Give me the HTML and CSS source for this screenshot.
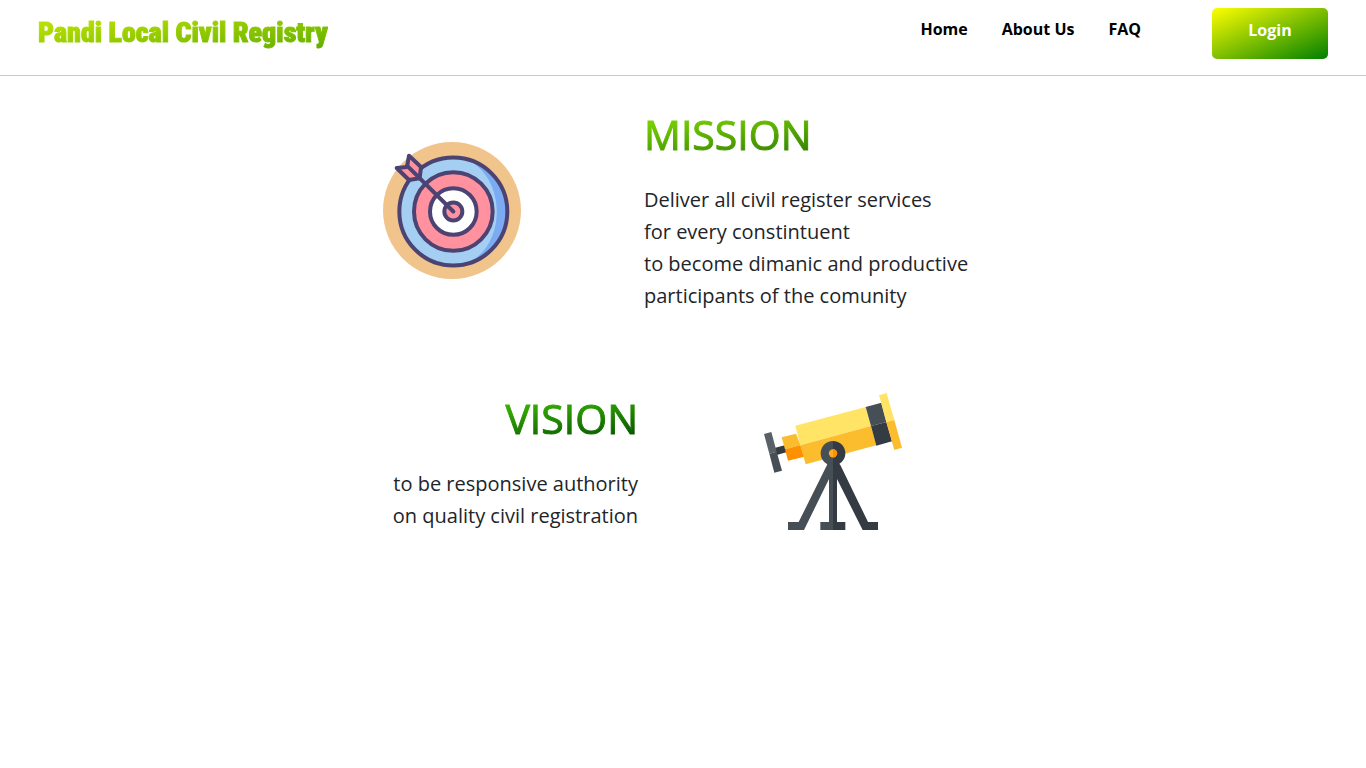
FILE: index.html
```html
<!DOCTYPE html>
<html lang="en">
<head>
<meta charset="utf-8">
<meta name="viewport" content="width=device-width, initial-scale=1">
<title>Pandi Local Civil Registry</title>
<link rel="stylesheet" href="styles.css">
</head>
<body>
<header class="site-header">
  <a class="brand" href="#">Pandi Local Civil Registry</a>
  <nav class="site-nav">
    <a href="#">Home</a>
    <a href="#">About Us</a>
    <a href="#">FAQ</a>
  </nav>
  <button class="login" type="button">Login</button>
</header>
<main class="content">
  <section class="row mission">
    <svg class="art" viewBox="39 36 414 411" aria-hidden="true">
      <ellipse cx="246" cy="241.500" rx="207" ry="205.500" fill="#f1c48b"/>
      <circle cx="250" cy="244.500" r="162" fill="#a4cff2"/>
      <path d="M286 86A163 163 0 0 1 286 403C412 350 412 140 286 86Z" fill="#7babf2"/>
      <g stroke="#4c4372" stroke-width="12">
        <circle cx="250" cy="244.500" r="162" fill="none"/>
        <circle cx="250" cy="244.500" r="118" fill="#ff929e"/>
        <circle cx="250" cy="244.500" r="70" fill="#fff"/>
        <circle cx="250" cy="244.500" r="27" fill="#ff929e"/>
        <path d="M117 77L153 111L149 145L117 150L80 114L111 111Z" fill="#ff929e" stroke-linejoin="round"/>
        <path d="M111 107L250 244.500" fill="none" stroke-linecap="round"/>
      </g>
    </svg>
    <div class="copy">
      <h1>MISSION</h1>
      <p>Deliver all civil register services<br>for every constintuent<br>to become dimanic and productive<br>participants of the comunity</p>
    </div>
  </section>
  <section class="row vision">
    <div class="copy">
      <h1>VISION</h1>
      <p>to be responsive authority<br>on quality civil registration</p>
    </div>
    <svg class="art" viewBox="27 24 414 411" aria-hidden="true">
      <path d="M58 189L92 180L97 201L62 211Z" fill="#343b42"/>
      <path d="M27 147L49 141L65 200L43 206Z" fill="#596067"/>
      <path d="M43 206L65 200L81 257L58 263Z" fill="#474f56"/>
      <path d="M80 157L123 146L137 181L90 193Z" fill="#fbbd2d"/>
      <path d="M90 193L136 181L148 215L99 227Z" fill="#ff9100"/>
      <path d="M121 122L332 66L348 123L136 181Z" fill="#ffe466"/>
      <path d="M136 181L348 123L364 181L152 238Z" fill="#fbbd2d"/>
      <path d="M332 66L379 53L394 111L348 123Z" fill="#474f56"/>
      <path d="M348 123L394 111L411 169L364 182Z" fill="#343b42"/>
      <path d="M372 31L395 24L418 105L394 111Z" fill="#ffe466"/>
      <path d="M394 111L418 105L441 188L418 195Z" fill="#fbbd2d"/>
      <path d="M219 232H234V290H222V282L147 435H99V411H131L216 240Z" fill="#474f56"/>
      <path d="M234 232H249L256 240L339 411H369V435H323L246 282V290H234Z" fill="#343b42"/>
      <path d="M222 240H234V435H196V411H222Z" fill="#474f56"/>
      <path d="M234 240H246V411H271V435H234Z" fill="#343b42"/>
      <path d="M234 168A37 37 0 0 0 234 242Z" fill="#474f56"/>
      <path d="M234 168A37 37 0 0 1 234 242Z" fill="#343b42"/>
      <circle cx="234" cy="205" r="12.500" fill="#fbac22"/>
      <path d="M234 192.500A12.500 12.500 0 0 1 234 217.500Z" fill="#ff9100"/>
    </svg>
  </section>
</main>
</body>
</html>
```
FILE: styles.css
```css
* { box-sizing: border-box; }

body {
  margin: 0;
  background: #fff;
  color: #212529;
  font-family: "Segoe UI", "Open Sans", "Noto Sans", sans-serif;
  font-size: 20px;
  line-height: 32px;
}

.site-header {
  display: flex;
  align-items: flex-start;
  padding: 8px 38px 16px;
  border-bottom: 1px solid #c8c8c8;
}

.brand {
  margin-top: 5px;
  margin-right: auto;
  padding: 4px 0;
  background: linear-gradient(172deg, #c8e800, #5cac00);
  -webkit-background-clip: text;
  background-clip: text;
  color: transparent;
  -webkit-text-stroke: 1px transparent;
  font-family: Impact, "Roboto Condensed", "Liberation Sans Narrow", sans-serif;
  font-size: 28px;
  font-weight: 900;
  text-decoration: none;
  white-space: nowrap;
}

.site-nav {
  display: flex;
  gap: 34px;
  margin-top: 9px;
  margin-right: 71px;
}

.site-nav a {
  color: #000;
  font-size: 16px;
  font-weight: 700;
  line-height: 24px;
  text-decoration: none;
}

.login {
  width: 116px;
  height: 51px;
  padding: 0 0 7px;
  border: 0;
  border-radius: 5px;
  background: linear-gradient(to bottom right, #ff0, #008000);
  color: #fff;
  font: inherit;
  font-size: 16px;
  font-weight: 700;
}

.content {
  display: grid;
  gap: 72px;
  max-width: 600px;
  margin: 0 auto;
  padding-top: 34px;
}

.row {
  display: flex;
  gap: 123px;
}

.art {
  flex: none;
  width: 138px;
  height: 137px;
}

.mission .art { margin-top: 32px; }

.vision { gap: 126px; }

.vision .art { margin-top: 9px; }

.vision .copy {
  width: 255px;
  margin-top: 10px;
  text-align: right;
}

.copy { white-space: nowrap; }

h1 {
  width: fit-content;
  margin: 0 0 26px;
  background: linear-gradient(172deg, #88e400, #2c7800);
  -webkit-background-clip: text;
  background-clip: text;
  color: transparent;
  -webkit-text-stroke: 1px transparent;
  font-size: 41px;
  font-weight: 500;
  line-height: 48px;
}

.vision h1 {
  margin-left: auto;
  background-image: linear-gradient(172deg, #44c800, #004800);
}

p { margin: 0; }
```
